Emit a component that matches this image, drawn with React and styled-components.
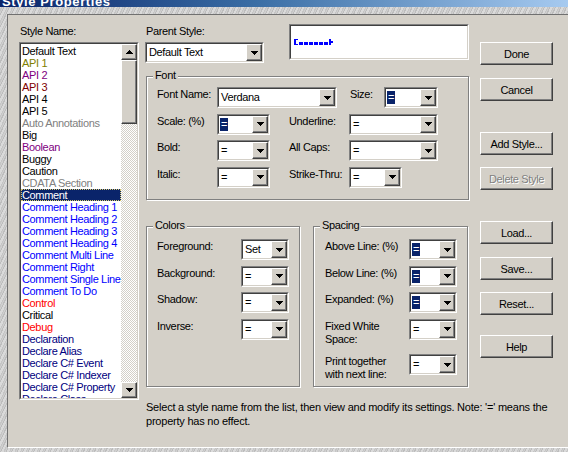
import React from 'react'
import styled, { createGlobalStyle, css } from 'styled-components'

const face = '#d4d0c8'

const GlobalStyle = createGlobalStyle`
  html, body {
    margin: 0;
    padding: 0;
  }
  body {
    width: 568px;
    height: 452px;
    overflow: hidden;
    font-family: "Liberation Sans", Arial, sans-serif;
    font-size: 11px;
    letter-spacing: -0.35px;
    color: #000;
  }
  * {
    box-sizing: border-box;
  }
`

const raised = css`
  background: ${face};
  border: 1px solid;
  border-color: #fff #404040 #404040 #fff;
  box-shadow: inset -1px -1px 0 #808080, inset 1px 1px 0 ${face};
`

const Screen = styled.div`
  width: 568px;
  height: 452px;
  display: flex;
  flex-direction: column;
  background: repeating-linear-gradient(
    115deg,
    #cfcfcf 0 1px,
    #bdbdbd 1px 2px,
    #dadada 2px 4px,
    #c5c5c5 4px 5px
  );
`

const TitleBar = styled.div`
  height: 7px;
  flex: none;
  overflow: hidden;
  background: linear-gradient(90deg, #0a246a 0%, #3a6ea5 45%, #a6caf0 100%);
`

const TitleText = styled.div`
  margin-top: -6px;
  padding-left: 2px;
  font-size: 13px;
  line-height: 15px;
  font-weight: bold;
  letter-spacing: 0.6px;
  color: #fff;
`

const Frame = styled.div`
  flex: 1;
  display: flex;
  padding: 7px 0 4px 7px;
`

const Panel = styled.div`
  flex: 1;
  display: flex;
  align-items: flex-start;
  padding: 10px 0 0 11px;
  background: ${face};
  border-top: 1px solid #707070;
  border-left: 1px solid #707070;
  border-bottom: 1px solid #fff;
`

const LeftCol = styled.div`
  width: 120px;
  flex: none;
  display: flex;
  flex-direction: column;
`

const Caption = styled.div`
  line-height: 13px;
  padding-left: 1px;
  white-space: nowrap;
`

const SunkenOuter = styled.div`
  border: 1px solid;
  border-color: #808080 #fff #fff #808080;
  flex: none;
`

const SunkenInner = styled.div`
  height: 100%;
  display: flex;
  background: #fff;
  border: 1px solid;
  border-color: #404040 ${face} ${face} #404040;
`

const ListFrame = styled(SunkenOuter)`
  margin-top: 4px;
  height: 358px;
`

const Items = styled.div`
  flex: 1;
  min-width: 0;
  overflow: hidden;
  padding-top: 1px;
`

const Item = styled.div`
  height: 12px;
  line-height: 12px;
  padding-left: 1px;
  white-space: nowrap;
  color: ${p => (p.$selected ? '#fff' : p.$color)};
  background: ${p => (p.$selected ? '#0a246a' : 'transparent')};
  outline: ${p => (p.$selected ? '1px dotted #d8c870' : 'none')};
  outline-offset: -1px;
`

const Scrollbar = styled.div`
  width: 16px;
  flex: none;
  display: flex;
  flex-direction: column;
`

const ScrollButton = styled.div`
  ${raised}
  height: 16px;
  flex: none;
  display: flex;
  align-items: center;
  justify-content: center;
`

const Thumb = styled.div`
  ${raised}
  height: 64px;
  flex: none;
`

const Track = styled.div`
  flex: 1;
  background: repeating-conic-gradient(${face} 0 25%, #fff 0 50%) 0 0 / 2px 2px;
`

const RightArea = styled.div`
  margin-left: 6px;
  display: flex;
  flex-direction: column;
`

const TopRow = styled.div`
  display: flex;
  align-items: flex-start;
`

const Middle = styled.div`
  width: 324px;
  flex: none;
  display: flex;
  flex-direction: column;
`

const HeadRow = styled.div`
  display: flex;
  align-items: flex-start;
  justify-content: space-between;
`

const ParentBlock = styled.div`
  display: flex;
  flex-direction: column;
  gap: 4px;
`

const PreviewFrame = styled(SunkenOuter)`
  width: 180px;
  height: 36px;
  margin-top: -1px;
`

const PreviewWell = styled(SunkenInner)`
  padding: 12px 3px 0;
  align-items: flex-start;
`

const Group = styled.div`
  position: relative;
  width: ${p => p.$w}px;
  height: ${p => p.$h}px;
  flex: none;
  display: flex;
  flex-direction: column;
  gap: 5.5px;
  padding: ${p => p.$pad};
  border: 1px solid #808080;
  box-shadow: inset 1px 1px 0 #fff, 1px 1px 0 #fff;
`

const Legend = styled.div`
  position: absolute;
  top: -8px;
  left: 6px;
  padding: 0 2px;
  line-height: 13px;
  background: ${face};
`

const FontGroup = styled(Group)`
  margin: 13px 0 0 1px;
`

const GroupRow = styled.div`
  display: flex;
  gap: 13px;
  margin: 26px 0 0 1px;
`

const Field = styled.div`
  display: flex;
  align-items: flex-start;
  min-height: ${p => p.$minH || 21}px;
`

const FieldLabel = styled.div`
  width: ${p => p.$w}px;
  margin-left: ${p => p.$ml || 0}px;
  flex: none;
  padding-top: 1px;
  line-height: 13px;
  white-space: nowrap;
`

const ComboFrame = styled(SunkenOuter)`
  width: ${p => p.$w}px;
  height: 21px;
`

const ComboText = styled.div`
  flex: 1;
  min-width: 0;
  display: flex;
  align-items: center;
  padding-left: 1px;
  white-space: nowrap;
  overflow: hidden;
`

const ComboValue = styled.span`
  line-height: 13px;
  padding: 0 1px;
  color: ${p => (p.$selected ? '#fff' : '#000')};
  background: ${p => (p.$selected ? '#0a246a' : 'transparent')};
`

const DropButton = styled(ScrollButton)`
  width: 16px;
  height: auto;
`

const ButtonCol = styled.div`
  width: 73px;
  margin-left: 11px;
  flex: none;
  display: flex;
  flex-direction: column;
`

const Button = styled.div`
  ${raised}
  height: 23px;
  margin-top: ${p => p.$mt}px;
  display: flex;
  align-items: center;
  justify-content: center;
  white-space: nowrap;
  color: ${p => (p.$disabled ? '#808080' : '#000')};
  text-shadow: ${p => (p.$disabled ? '1px 1px 0 #fff' : 'none')};
`

const Note = styled.div`
  margin-top: 13px;
  padding-left: 1px;
  line-height: 14px;
  letter-spacing: -0.22px;
  white-space: nowrap;
`

const Arrow = ({ up }) => (
  <svg width="7" height="4" viewBox="0 0 7 4" shapeRendering="crispEdges">
    <polygon points={up ? '3.5,0 7,4 0,4' : '0,0 7,0 3.5,4'} fill="#000" />
  </svg>
)

const Combo = ({ w, value, selected }) => (
  <ComboFrame $w={w}>
    <SunkenInner>
      <ComboText>
        <ComboValue $selected={selected}>{value}</ComboValue>
      </ComboText>
      <DropButton>
        <Arrow />
      </DropButton>
    </SunkenInner>
  </ComboFrame>
)

const styles = [
  ['Default Text', '#000'],
  ['API 1', '#808000'],
  ['API 2', '#800080'],
  ['API 3', '#800000'],
  ['API 4', '#000'],
  ['API 5', '#000'],
  ['Auto Annotations', '#808080'],
  ['Big', '#000'],
  ['Boolean', '#800080'],
  ['Buggy', '#000'],
  ['Caution', '#000'],
  ['CDATA Section', '#808080'],
  ['Comment', '#000', true],
  ['Comment Heading 1', '#0000ff'],
  ['Comment Heading 2', '#0000ff'],
  ['Comment Heading 3', '#0000ff'],
  ['Comment Heading 4', '#0000ff'],
  ['Comment Multi Line', '#0000ff'],
  ['Comment Right', '#0000ff'],
  ['Comment Single Line', '#0000ff'],
  ['Comment To Do', '#0000ff'],
  ['Control', '#ff0000'],
  ['Critical', '#000'],
  ['Debug', '#ff0000'],
  ['Declaration', '#000080'],
  ['Declare Alias', '#000080'],
  ['Declare C# Event', '#000080'],
  ['Declare C# Indexer', '#000080'],
  ['Declare C# Property', '#000080'],
  ['Declare Class', '#000080'],
]

const colorRows = [
  ['Foreground:', 'Set'],
  ['Background:', '='],
  ['Shadow:', '='],
  ['Inverse:', '='],
]

const spacingRows = [
  { label: 'Above Line: (%)', selected: true },
  { label: 'Below Line: (%)', selected: true },
  { label: 'Expanded: (%)', selected: true },
  { label: ['Fixed White', 'Space:'], minH: 30 },
  { label: ['Print together', 'with next line:'] },
]

const buttons = [
  ['Done', 17],
  ['Cancel', 13],
  ['Add Style...', 31],
  ['Delete Style', 12, true],
  ['Load...', 31],
  ['Save...', 13],
  ['Reset...', 12],
  ['Help', 20],
]

const PreviewSample = () => (
  <svg width="40" height="8" viewBox="0 0 40 8" shapeRendering="crispEdges">
    <g fill="#0000ff">
      <rect x="0" y="1" width="2" height="6" />
      <rect x="2" y="1" width="2" height="1" />
      <rect x="2" y="6" width="2" height="1" />
      {[5, 10, 15, 20, 25, 30].map(x => (
        <rect key={x} x={x} y="4" width="4" height="3" />
      ))}
      <rect x="35" y="1" width="2" height="6" />
      <rect x="37" y="3" width="2" height="2" />
    </g>
  </svg>
)

const App = () => {
  return (
    <Screen>
      <GlobalStyle />
      <TitleBar>
        <TitleText>Style Properties</TitleText>
      </TitleBar>
      <Frame>
        <Panel>
          <LeftCol>
            <Caption>Style Name:</Caption>
            <ListFrame>
              <SunkenInner>
                <Items>
                  {styles.map(([name, color, selected]) => (
                    <Item key={name} $color={color} $selected={selected}>
                      {name}
                    </Item>
                  ))}
                </Items>
                <Scrollbar>
                  <ScrollButton>
                    <Arrow up />
                  </ScrollButton>
                  <Thumb />
                  <Track />
                  <ScrollButton>
                    <Arrow />
                  </ScrollButton>
                </Scrollbar>
              </SunkenInner>
            </ListFrame>
          </LeftCol>

          <RightArea>
            <TopRow>
              <Middle>
                <HeadRow>
                  <ParentBlock>
                    <Caption>Parent Style:</Caption>
                    <Combo w={119} value="Default Text" />
                  </ParentBlock>
                  <PreviewFrame>
                    <PreviewWell>
                      <PreviewSample />
                    </PreviewWell>
                  </PreviewFrame>
                </HeadRow>

                <FontGroup $w={323} $h={124} $pad="10px 0 0 10px">
                  <Legend>Font</Legend>
                  <Field>
                    <FieldLabel $w={60}>Font Name:</FieldLabel>
                    <Combo w={120} value="Verdana" />
                    <FieldLabel $w={34} $ml={13}>Size:</FieldLabel>
                    <Combo w={54} value="=" selected />
                  </Field>
                  <Field>
                    <FieldLabel $w={60}>Scale: (%)</FieldLabel>
                    <Combo w={53} value="=" selected />
                    <FieldLabel $w={60} $ml={19}>Underline:</FieldLabel>
                    <Combo w={89} value="=" />
                  </Field>
                  <Field>
                    <FieldLabel $w={60}>Bold:</FieldLabel>
                    <Combo w={53} value="=" />
                    <FieldLabel $w={60} $ml={19}>All Caps:</FieldLabel>
                    <Combo w={89} value="=" />
                  </Field>
                  <Field>
                    <FieldLabel $w={60}>Italic:</FieldLabel>
                    <Combo w={53} value="=" />
                    <FieldLabel $w={60} $ml={19}>Strike-Thru:</FieldLabel>
                    <Combo w={53} value="=" />
                  </Field>
                </FontGroup>

                <GroupRow>
                  <Group $w={154} $h={161} $pad="12px 0 0 10px">
                    <Legend>Colors</Legend>
                    {colorRows.map(([label, value]) => (
                      <Field key={label}>
                        <FieldLabel $w={84}>{label}</FieldLabel>
                        <Combo w={48} value={value} />
                      </Field>
                    ))}
                  </Group>
                  <Group $w={155} $h={161} $pad="12px 0 0 11px">
                    <Legend>Spacing</Legend>
                    {spacingRows.map(row => {
                      const lines = Array.isArray(row.label) ? row.label : [row.label]
                      return (
                        <Field key={lines[0]} $minH={row.minH}>
                          <FieldLabel $w={84}>
                            {lines.map(l => (
                              <div key={l}>{l}</div>
                            ))}
                          </FieldLabel>
                          <Combo w={48} value="=" selected={row.selected} />
                        </Field>
                      )
                    })}
                  </Group>
                </GroupRow>
              </Middle>

              <ButtonCol>
                {buttons.map(([label, mt, disabled]) => (
                  <Button key={label} $mt={mt} $disabled={disabled}>
                    {label}
                  </Button>
                ))}
              </ButtonCol>
            </TopRow>

            <Note>
              Select a style name from the list, then view and modify its settings. Note: '=' means the
              <br />
              property has no effect.
            </Note>
          </RightArea>
        </Panel>
      </Frame>
    </Screen>
  )
}

export default App
